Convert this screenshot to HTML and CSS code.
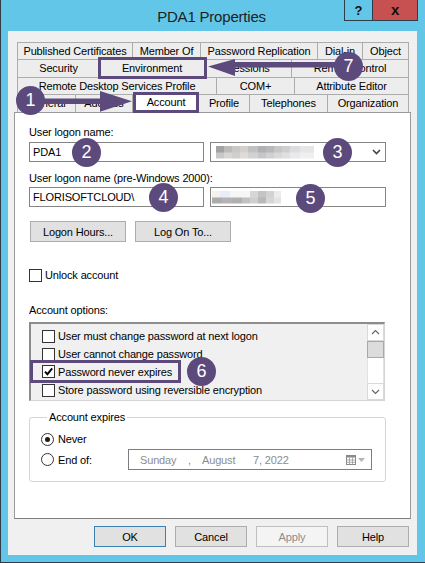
FILE: index.html
```html
<!DOCTYPE html>
<html>
<head>
<meta charset="utf-8">
<title>PDA1 Properties</title>
<link rel="stylesheet" href="styles.css">
</head>
<body>
<div class="window">
  <div class="titlebar">
    <div class="tb-spacer"></div>
    <div class="title">PDA1 Properties</div>
    <div class="tb-controls">
      <span class="btn-help">?</span>
      <span class="btn-close">x</span>
    </div>
  </div>

  <div class="client">
    <div class="tabs">
      <div class="tabrow r1">
        <div class="tab">Published Certificates</div>
        <div class="tab">Member Of</div>
        <div class="tab">Password Replication</div>
        <div class="tab">Dial-in</div>
        <div class="tab">Object</div>
      </div>
      <div class="tabrow r2">
        <div class="tab">Security</div>
        <div class="tab env">Environment</div>
        <div class="tab">Sessions</div>
        <div class="tab">Remote control</div>
      </div>
      <div class="tabrow r3">
        <div class="tab">Remote Desktop Services Profile</div>
        <div class="tab">COM+</div>
        <div class="tab">Attribute Editor</div>
      </div>
      <div class="tabrow r4">
        <div class="tab">General</div>
        <div class="tab">Address</div>
        <div class="tab sel">Account</div>
        <div class="tab">Profile</div>
        <div class="tab">Telephones</div>
        <div class="tab">Organization</div>
      </div>
    </div>

    <div class="panel">
      <div class="label lbl-logon">User logon name:</div>
      <div class="input-row row-logon">
        <div class="textbox">PDA1</div>
        <div class="textbox combo">
          <span class="blur blur-upn"></span>
          <svg class="combo-arrow" width="9" height="6" viewBox="0 0 9 6"><polyline points="1,1 4.5,4.5 8,1" fill="none" stroke="#444" stroke-width="1.6"/></svg>
        </div>
      </div>
      <div class="label lbl-pre">User logon name (pre-Windows 2000):</div>
      <div class="input-row row-pre">
        <div class="textbox">FLORISOFTCLOUD\</div>
        <div class="textbox wide"><span class="blur blur-sam"></span></div>
      </div>
      <div class="btn-row">
        <div class="btn btn-hours">Logon Hours...</div>
        <div class="btn btn-logon">Log On To...</div>
      </div>
      <div class="check-row unlock">
        <span class="chk"></span>
        <span class="check-text">Unlock account</span>
      </div>
      <div class="label lbl-options">Account options:</div>
      <div class="listbox">
        <div class="list-items">
          <div class="item"><span class="chk"></span><span class="check-text">User must change password at next logon</span></div>
          <div class="item"><span class="chk"></span><span class="check-text">User cannot change password</span></div>
          <div class="item hl"><span class="chk"><svg width="11" height="11" viewBox="0 0 11 11"><path d="M2 5.6 L4.4 8.2 L9.2 2.4" fill="none" stroke="#000" stroke-width="1.9"/></svg></span><span class="check-text">Password never expires</span></div>
          <div class="item"><span class="chk"></span><span class="check-text">Store password using reversible encryption</span></div>
        </div>
        <div class="sb">
          <div class="sb-btn"><svg width="15" height="15" viewBox="0 0 15 15"><polyline points="4,9 7.5,5.5 11,9" fill="none" stroke="#666" stroke-width="1.2"/></svg></div>
          <div class="sb-thumb"></div>
          <div class="sb-track"></div>
          <div class="sb-btn"><svg width="15" height="15" viewBox="0 0 15 15"><polyline points="4,6 7.5,9.5 11,6" fill="none" stroke="#666" stroke-width="1.2"/></svg></div>
        </div>
      </div>
      <fieldset class="group">
        <legend>Account expires</legend>
        <div class="radio-row never">
          <span class="radio on"></span>
          <span class="radio-text">Never</span>
        </div>
        <div class="radio-row endof">
          <div class="radio-wrap">
            <span class="radio"></span>
            <span class="radio-text">End of:</span>
          </div>
          <div class="date">
            <span class="d-dow">Sunday</span>
            <span class="d-comma">,</span>
            <span class="d-month">August</span>
            <span class="d-day">7, 2022</span>
            <svg class="cal" width="10" height="10" viewBox="0 0 10 10">
              <rect x="0.5" y="0.5" width="9" height="9" fill="#fff" stroke="#8a8a8a"/>
              <rect x="0.5" y="0.5" width="9" height="2" fill="#8a8a8a"/>
              <path d="M3.5 2.5 V9.5 M6.5 2.5 V9.5 M0.5 5 H9.5 M0.5 7.3 H9.5" stroke="#9a9a9a" stroke-width="0.8"/>
            </svg>
            <svg class="dd" width="7" height="4" viewBox="0 0 7 4"><polygon points="0,0 7,0 3.5,4" fill="#b4b4b4"/></svg>
          </div>
        </div>
      </fieldset>
    </div>

    <div class="dlg-buttons">
      <div class="btn dlg ok">OK</div>
      <div class="btn dlg">Cancel</div>
      <div class="btn dlg apply">Apply</div>
      <div class="btn dlg">Help</div>
    </div>
  </div>

  <div class="overlay">
    <svg class="arrows" width="425" height="563" viewBox="0 0 425 563">
      <rect x="44" y="98.5" width="58" height="5.5" fill="#5d4a7c"/>
      <polygon points="100,91 132,101.3 100,111.7" fill="#5d4a7c"/>
      <rect x="233" y="62" width="112" height="5.5" fill="#5d4a7c"/>
      <polygon points="235,59 208,66.5 235,76" fill="#5d4a7c"/>
    </svg>
    <div class="badge b1">1</div>
    <div class="badge b2">2</div>
    <div class="badge b3">3</div>
    <div class="badge b4">4</div>
    <div class="badge b5">5</div>
    <div class="badge b6">6</div>
    <div class="badge b7">7</div>
  </div>
</div>
</body>
</html>
```

FILE: styles.css
```css
html, body {
  margin: 0;
  padding: 0;
  background: #fff;
}

.window {
  position: relative;
  width: 425px;
  height: 563px;
  box-sizing: border-box;
  background: #62c6e8;
  border-left: 1px solid #2e3d47;
  border-bottom: 1px solid #2e3d47;
  display: flex;
  flex-direction: column;
  font-family: "Liberation Sans", Arial, sans-serif;
  font-size: 11px;
  letter-spacing: -0.15px;
  color: #000;
}

/* title bar */
.titlebar {
  height: 31px;
  flex: none;
  display: grid;
  grid-template-columns: 1fr auto 1fr;
  padding-right: 3px;
}
.title {
  align-self: start;
  padding-top: 1px;
  line-height: 31px;
  font-size: 15px;
  letter-spacing: -0.2px;
  color: #1e1e1e;
}
.tb-controls {
  justify-self: end;
  align-self: start;
  margin-right: 4px;
  display: flex;
  height: 21px;
  box-sizing: border-box;
  border: 1px solid #2e3d47;
  border-top: none;
}
.btn-help {
  width: 27px;
  border-right: 1px solid #2e3d47;
  display: flex;
  align-items: center;
  justify-content: center;
  font-weight: bold;
  font-size: 13px;
  color: #111;
}
.btn-close {
  width: 44px;
  background: #c75050;
  display: flex;
  align-items: center;
  justify-content: center;
  font-weight: bold;
  font-size: 15px;
  line-height: 1;
  padding-bottom: 2px;
  box-sizing: border-box;
  color: #111;
}

/* client area */
.client {
  flex: 1;
  margin: 0 8px 7px 7px;
  background: #f0f0f0;
  padding-top: 11px;
  box-sizing: border-box;
}

/* tabs */
.tabs {
  margin-left: 9px;
  width: 392px;
}
.tabrow {
  display: grid;
}
.r1 { grid-template-columns: 116px 68px 117px 45px 46px; height: 17px; }
.r2 { grid-template-columns: 83px 105px 87px 117px; height: 18px; }
.r3 { grid-template-columns: 200px 78px 114px; height: 17px; }
.r4 { grid-template-columns: 59px 57px 66px 51px 78px 81px; height: 18px; }

.tab {
  box-sizing: border-box;
  border-top: 1px solid #acacac;
  border-right: 1px solid #acacac;
  background: #ededed;
  display: flex;
  align-items: center;
  justify-content: center;
  white-space: nowrap;
  line-height: 1;
}
.tab:first-child {
  border-left: 1px solid #acacac;
}
.tab.env {
  position: relative;
  z-index: 1;
  outline: 3px solid #5d4a7c;
  outline-offset: -1px;
}
.tab.sel {
  position: relative;
  z-index: 2;
  margin: -2px 0 -1px 0;
  background: #fff;
  border: 3px solid #5d4a7c;
}

/* panel */
.panel {
  margin-left: 6px;
  width: 397px;
  height: 407px;
  box-sizing: border-box;
  background: #fff;
  border: 1px solid #9a9a9a;
  border-bottom-color: #7f7f7f;
  padding-left: 14px;
  display: flex;
  flex-direction: column;
  align-items: flex-start;
}
.label {
  line-height: 13px;
  white-space: nowrap;
}
.lbl-logon { margin-top: 13px; }
.lbl-pre { margin-top: 10px; }
.lbl-options { margin-top: 22px; }

.input-row {
  display: flex;
  gap: 6px;
  height: 20px;
}
.row-logon { margin-top: 3px; }
.row-pre { margin-top: 2px; }

.textbox {
  width: 175px;
  box-sizing: border-box;
  border: 1px solid #858585;
  background: #fff;
  padding-left: 3px;
  display: flex;
  align-items: center;
  white-space: nowrap;
}
.textbox.combo,
.textbox.wide {
  width: 176px;
  padding-left: 5px;
}
.combo {
  justify-content: space-between;
  padding-right: 4px;
}
.combo-arrow {
  display: block;
}

.blur {
  display: block;
  height: 13px;
  filter: blur(0.6px);
}
.blur-upn {
  width: 98px;
  background:
    linear-gradient(90deg, #a3a3a6 0 8px, #bdbab8 8px 16px, #cac7c5 16px 24px, #d3d0cd 24px 32px, #c1c1c1 32px 42px, #b1b0b2 42px 50px, #b8b8ba 50px 58px, #c9c7c6 58px 66px, #cfcfcf 66px 74px, #dcdde2 74px 84px, #e6e6e9 84px 98px) top / 100% 50% no-repeat,
    linear-gradient(90deg, #c8c8c8 0 8px, #d8d6d4 8px 16px, #cfcfcf 16px 24px, #dedcda 24px 32px, #d2d2d2 32px 42px, #c6c6c8 42px 50px, #d0d0d0 50px 58px, #dad8d8 58px 66px, #e0e0e0 66px 74px, #e9e9ec 74px 84px, #efeff0 84px 98px) bottom / 100% 50% no-repeat;
}
.blur-sam {
  width: 69px;
  margin-left: -4px;
  background:
    linear-gradient(90deg, #f5f2ee 0 8px, #e9edf5 8px 18px, #f6f6f6 18px 38px, #d6d6d6 38px 46px, #c4c4c4 46px 54px, #d2d2d2 54px 62px, #ececec 62px 69px) top / 100% 50% no-repeat,
    linear-gradient(90deg, #ababab 0 10px, #b5b3b3 10px 20px, #b0b0b0 20px 30px, #c1c1c1 30px 38px, #cfcfcf 38px 46px, #b9b9b9 46px 54px, #d6d6d6 54px 62px, #e3e3e3 62px 69px) bottom / 100% 50% no-repeat;
}

/* buttons */
.btn {
  box-sizing: border-box;
  height: 21px;
  border: 1px solid #adadad;
  background: #e1e1e1;
  display: flex;
  align-items: center;
  justify-content: center;
  white-space: nowrap;
}
.btn-row {
  display: flex;
  gap: 9px;
  margin-top: 14px;
  margin-left: 1px;
}
.btn-hours, .btn-logon { width: 96px; }

/* checkboxes */
.check-row {
  display: flex;
  align-items: center;
  height: 14px;
}
.unlock { margin-top: 26px; }
.chk {
  flex: none;
  width: 13px;
  height: 13px;
  box-sizing: border-box;
  border: 1px solid #333;
  background: #fff;
  display: flex;
  align-items: center;
  justify-content: center;
}
.chk svg { display: block; }
.check-text {
  margin-left: 3px;
  white-space: nowrap;
}

/* list box */
.listbox {
  margin-top: 5px;
  width: 356px;
  height: 79px;
  box-sizing: border-box;
  border-top: 2px solid #8c8c8c;
  border-left: 2px solid #8c8c8c;
  border-right: 1px solid #d4d4d4;
  border-bottom: 1px solid #d4d4d4;
  background: #f0f0f0;
  display: flex;
}
.list-items {
  flex: 1;
  padding-top: 3px;
  display: flex;
  flex-direction: column;
  align-items: flex-start;
}
.item {
  display: flex;
  align-items: center;
  height: 18px;
  margin-left: 2px;
  padding: 0 6px 0 9px;
  box-sizing: border-box;
}
.item.hl {
  outline: 3px solid #5d4a7c;
  outline-offset: 0;
  height: 17px;
  margin: 0 0 1px 2px;
}
.sb {
  width: 17px;
  display: flex;
  flex-direction: column;
  background: #fff;
}
.sb-btn {
  height: 17px;
  box-sizing: border-box;
  border: 1px solid #d9d9d9;
  display: flex;
  align-items: center;
  justify-content: center;
}
.sb-btn svg { display: block; }
.sb-thumb {
  height: 17px;
  box-sizing: border-box;
  background: #dcdcdc;
  border: 1px solid #a9a9a9;
}
.sb-track {
  flex: 1;
  border-left: 1px solid #e2e2e2;
  border-right: 1px solid #e2e2e2;
}

/* group box */
.group {
  margin: 10px 0 0 0;
  width: 357px;
  box-sizing: border-box;
  border: 1px solid #d5d5d5;
  border-radius: 3px;
  padding: 8px 0 11px 11px;
  min-width: 0;
}
.group legend {
  margin-left: 6px;
  padding: 0 2px;
  line-height: 13px;
}
.radio-row {
  display: flex;
  align-items: center;
}
.never { height: 14px; }
.endof { height: 21px; margin-top: 3px; }
.radio-wrap {
  width: 87px;
  display: flex;
  align-items: center;
}
.radio {
  flex: none;
  width: 13px;
  height: 13px;
  box-sizing: border-box;
  border: 1px solid #333;
  border-radius: 50%;
  background: #fff;
  display: flex;
  align-items: center;
  justify-content: center;
}
.radio.on::after {
  content: "";
  width: 5px;
  height: 5px;
  border-radius: 50%;
  background: #1b1b1b;
}
.radio-text {
  margin-left: 4px;
  white-space: nowrap;
}
.date {
  width: 244px;
  height: 21px;
  box-sizing: border-box;
  border: 1px solid #7d7d7d;
  background: #fff;
  display: flex;
  align-items: center;
  padding: 0 6px 0 11px;
  color: #8c8c8c;
  white-space: nowrap;
}
.d-dow { width: 48px; }
.d-comma { width: 14px; }
.d-month { width: 51px; }
.d-day { flex: 1; }
.cal { display: block; margin-right: 2px; }
.dd { display: block; }

/* dialog buttons */
.dlg-buttons {
  display: flex;
  justify-content: flex-end;
  gap: 9px;
  margin-top: 7px;
  padding-right: 8px;
}
.btn.dlg { width: 72px; }
.btn.ok { border-color: #3c7fb1; }
.btn.apply {
  background: #f4f4f4;
  border-color: #bfbfbf;
  color: #8d8d8d;
}

/* annotations */
.overlay {
  position: absolute;
  left: -1px;
  top: 0;
  width: 425px;
  height: 563px;
  pointer-events: none;
}
.arrows {
  position: absolute;
  left: 0;
  top: 0;
}
.badge {
  position: absolute;
  width: 29px;
  height: 29px;
  border-radius: 50%;
  background: #5d4a7c;
  color: #fff;
  font-family: "Liberation Sans", Arial, sans-serif;
  font-size: 18px;
  letter-spacing: 0;
  display: flex;
  align-items: center;
  justify-content: center;
}
.b1 { left: 16px; top: 86px; }
.b2 { left: 72px; top: 138px; }
.b3 { left: 323px; top: 138px; }
.b4 { left: 149px; top: 183px; }
.b5 { left: 296px; top: 184px; }
.b6 { left: 187px; top: 357px; }
.b7 { left: 334px; top: 52px; }
```
